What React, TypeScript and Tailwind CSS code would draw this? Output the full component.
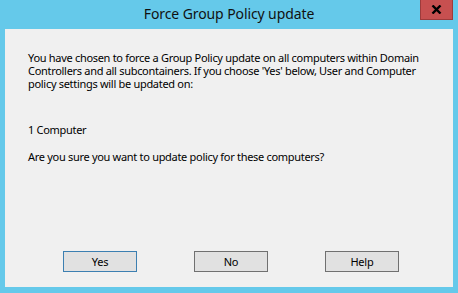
import React from 'react';

const font = { fontFamily: '"Noto Sans", "Open Sans", sans-serif' };

const DialogButton = ({ label, isDefault }: { label: string; isDefault?: boolean }) => (
  <button
    className={`w-[74px] h-[21px] bg-[#e1e1e1] text-[11px] leading-none tracking-[-0.2px] text-black border ${
      isDefault ? 'border-[#3c7fb1]' : 'border-[#707070]'
    }`}
  >
    {label}
  </button>
);

export default function App() {
  return (
    <div className="w-[458px] h-[293px] bg-[#65c9ea] flex flex-col relative" style={font}>
      <div className="h-[29px] pb-[3px] flex items-center justify-center text-[14px] tracking-[-0.1px] text-[#111]">
        Force Group Policy update
      </div>
      <div className="absolute top-0 right-[5px] w-[33px] h-[20px] bg-[#c75050] border border-[#9d3b3b] border-t-0 flex items-center justify-center">
        <svg width="11" height="9" viewBox="0 0 11 9">
          <path d="M1.5 0.5 L9.5 8.5 M9.5 0.5 L1.5 8.5" stroke="#000" strokeWidth="2.4" />
        </svg>
      </div>
      <div className="mx-[5px] h-[258px] bg-[#f0f0f0] flex flex-col pl-[23px] pt-[22px] pb-[15px] text-[11px] leading-[13px] tracking-[-0.3px] text-black whitespace-nowrap">
        <p>
          You have chosen to force a Group Policy update on all computers within Domain
          <br />
          Controllers and all subcontainers. If you choose 'Yes' below, User and Computer
          <br />
          policy settings will be updated on:
        </p>
        <p className="mt-[33px]">1 Computer</p>
        <p className="mt-[14px]">Are you sure you want to update policy for these computers?</p>
        <div className="mt-auto flex gap-[57px] pl-[35px]">
          <DialogButton label="Yes" isDefault />
          <DialogButton label="No" />
          <DialogButton label="Help" />
        </div>
      </div>
    </div>
  );
}
